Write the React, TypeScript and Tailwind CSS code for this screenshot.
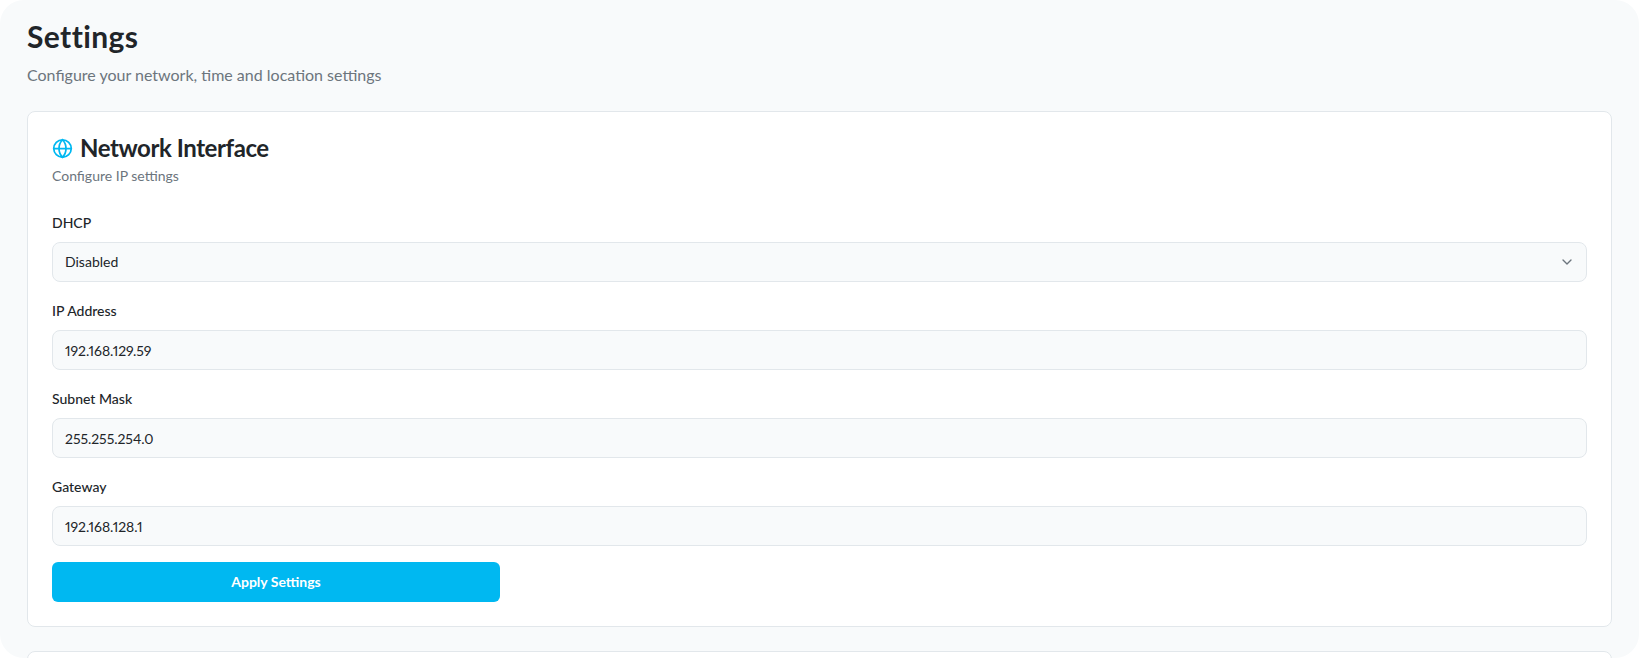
import React from 'react';
import { ChevronDown, Globe } from 'lucide-react';

const labelClass = 'block text-sm font-medium leading-[26px] text-[#212529] mb-1.5';
const fieldClass =
  'block w-full h-10 px-3 rounded-lg border border-[#e2e7eb] bg-[#f8fafb] text-sm text-[#212529] outline-none';

const fields = [
  { label: 'IP Address', value: '192.168.129.59' },
  { label: 'Subnet Mask', value: '255.255.254.0' },
  { label: 'Gateway', value: '192.168.128.1' },
];

export default function App() {
  return (
    <div className="h-screen overflow-hidden bg-white font-['Lato','Open_Sans',sans-serif]">
      <div className="h-full overflow-hidden rounded-3xl bg-[#f8fafb] px-[27px] pt-[18px]">
        <h1 className="text-3xl leading-9 font-bold tracking-[0.4px] text-[#212529]">Settings</h1>
        <p className="mt-[9px] text-base leading-6 text-[#6c757d]">Configure your network, time and location settings</p>

        <section className="mt-[24px] rounded-lg border border-[#e2e7eb] bg-white p-6">
          <div className="flex items-center gap-[7px]">
            <Globe className="w-[21px] h-[21px] text-[#00b8f1]" />
            <h2 className="text-2xl leading-6 font-bold tracking-[-0.43px] text-[#212529]">Network Interface</h2>
          </div>
          <p className="mt-1.5 text-sm leading-5 text-[#6c757d]">Configure IP settings</p>

          <div className="mt-6">
            <label className={labelClass}>DHCP</label>
            <div className="relative">
              <select defaultValue="Disabled" className={`${fieldClass} appearance-none`}>
                <option>Disabled</option>
                <option>Enabled</option>
              </select>
              <ChevronDown className="absolute right-3 top-3 w-4 h-4 text-[#6c757d]" />
            </div>
          </div>

          {fields.map(f => (
            <div key={f.label} className="mt-4">
              <label className={labelClass}>{f.label}</label>
              <input readOnly value={f.value} className={`${fieldClass} proportional-nums tracking-[-0.05px]`} />
            </div>
          ))}

          <button className="mt-4 block w-full max-w-md h-10 rounded-md bg-[#00b8f1] text-sm font-bold text-white">
            Apply Settings
          </button>
        </section>

        <section className="mt-6 h-40 rounded-lg border border-[#e2e7eb] bg-white" />
      </div>
    </div>
  );
}
